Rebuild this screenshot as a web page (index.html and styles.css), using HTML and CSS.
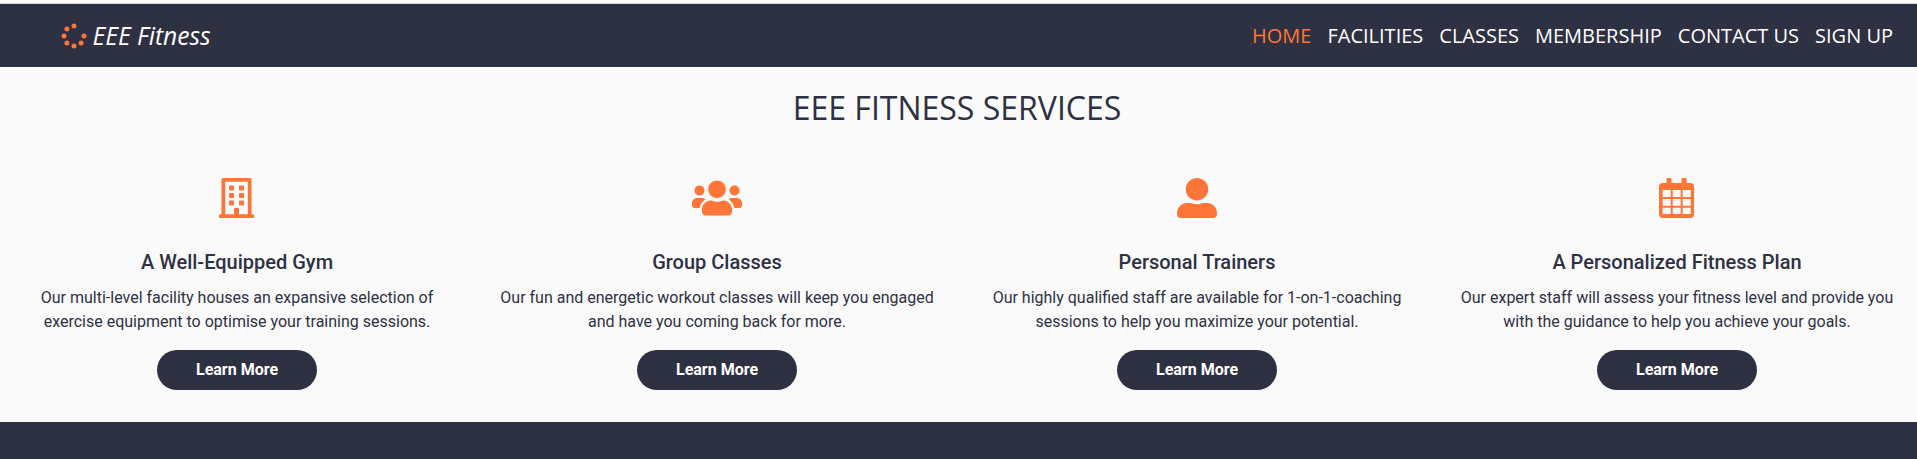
FILE: index.html
```html
<!DOCTYPE html>
<html lang="en">
<head>
<meta charset="utf-8">
<title>EEE Fitness</title>
<link rel="stylesheet" href="styles.css">
</head>
<body>
<header class="header">
  <a class="logo">
    <svg class="logo-mark" viewBox="0 0 26 26"><circle cx="13" cy="3" r="2.5"/><circle cx="5.9" cy="5.900" r="2.5"/><circle cx="3" cy="13" r="2.5"/><circle cx="5.9" cy="20.1" r="2.5"/><circle cx="13" cy="23" r="2.5"/><circle cx="20.1" cy="20.1" r="2.5"/><circle cx="23" cy="13" r="2.5"/></svg>
    <span>EEE Fitness</span>
  </a>
  <nav class="nav">
    <a class="active">Home</a><a>Facilities</a><a>Classes</a><a>Membership</a><a>Contact Us</a><a>Sign Up</a>
  </nav>
</header>
<main class="services">
  <h1 class="title">EEE Fitness Services</h1>
  <div class="grid">
    <section class="card">
      <svg class="icon icon-narrow" width="35" height="40" viewBox="0 0 448 512"><path d="M128 148v-40c0-6.600 5.400-12 12-12h40c6.600 0 12 5.400 12 12v40c0 6.600-5.400 12-12 12h-40c-6.600 0-12-5.400-12-12zm140 12h40c6.600 0 12-5.400 12-12v-40c0-6.600-5.400-12-12-12h-40c-6.600 0-12 5.400-12 12v40c0 6.600 5.400 12 12 12zm-128 96h40c6.600 0 12-5.400 12-12v-40c0-6.600-5.400-12-12-12h-40c-6.600 0-12 5.400-12 12v40c0 6.600 5.400 12 12 12zm128 0h40c6.600 0 12-5.400 12-12v-40c0-6.600-5.400-12-12-12h-40c-6.600 0-12 5.400-12 12v40c0 6.600 5.400 12 12 12zm-76 84v-40c0-6.600-5.400-12-12-12h-40c-6.600 0-12 5.400-12 12v40c0 6.600 5.400 12 12 12h40c6.600 0 12-5.400 12-12zm76 12h40c6.600 0 12-5.400 12-12v-40c0-6.600-5.400-12-12-12h-40c-6.600 0-12 5.400-12 12v40c0 6.600 5.400 12 12 12zm180 124v36H0v-36c0-6.600 5.400-12 12-12h19.500V24c0-13.300 10.700-24 24-24h337c13.300 0 24 10.700 24 24v440H436c6.600 0 12 5.400 12 12zM79.500 463H192v-67c0-6.600 5.400-12 12-12h40c6.600 0 12 5.400 12 12v67h112.500V49L80 48l-.5 415z"/></svg>
      <h2>A Well-Equipped Gym</h2>
      <p>Our multi-level facility houses an expansive selection of<br>exercise equipment to optimise your training sessions.</p>
      <a class="button">Learn More</a>
    </section>
    <section class="card">
      <svg class="icon" width="50" height="40" viewBox="0 0 640 512"><path d="M96 224c35.300 0 64-28.700 64-64s-28.700-64-64-64-64 28.700-64 64 28.700 64 64 64zm448 0c35.300 0 64-28.700 64-64s-28.700-64-64-64-64 28.700-64 64 28.700 64 64 64zm32 32h-64c-17.600 0-33.500 7.100-45.100 18.600 40.300 22.100 68.900 62 75.100 109.400h66c17.700 0 32-14.300 32-32v-32c0-35.300-28.700-64-64-64zm-256 0c61.900 0 112-50.100 112-112S381.900 32 320 32 208 82.100 208 144s50.100 112 112 112zm76.800 32h-8.300c-20.800 10-43.900 16-68.500 16s-47.600-6-68.500-16h-8.300C179.600 288 128 339.600 128 403.200V432c0 26.500 21.500 48 48 48h288c26.500 0 48-21.500 48-48v-28.800c0-63.600-51.600-115.200-115.200-115.200zm-223.700-13.400C161.500 263.100 145.600 256 128 256H64c-35.300 0-64 28.700-64 64v32c0 17.700 14.300 32 32 32h65.900c6.300-47.400 34.900-87.300 75.200-109.400z"/></svg>
      <h2>Group Classes</h2>
      <p>Our fun and energetic workout classes will keep you engaged<br>and have you coming back for more.</p>
      <a class="button">Learn More</a>
    </section>
    <section class="card">
      <svg class="icon" width="40" height="40" viewBox="0 0 512 512"><path d="M256 288c79.500 0 144-64.500 144-144S335.500 0 256 0 112 64.500 112 144s64.500 144 144 144zm128 32h-55.100c-22.200 10.200-46.900 16-72.900 16s-50.600-5.800-72.900-16H128C57.300 320 0 377.300 0 448v16c0 26.500 21.500 48 48 48h416c26.500 0 48-21.500 48-48v-16c0-70.700-57.300-128-128-128z"/></svg>
      <h2>Personal Trainers</h2>
      <p>Our highly qualified staff are available for 1-on-1-coaching<br>sessions to help you maximize your potential.</p>
      <a class="button">Learn More</a>
    </section>
    <section class="card">
      <svg class="icon icon-narrow" width="35" height="40" viewBox="0 0 35 40"><path fill-rule="evenodd" d="M8.300 0h3.400q.8 0 .8.800V5h10V.8q0-.8.800-.8h3.400q.8 0 .8.800V5h3.800q3.700 0 3.700 3.700v27.600q0 3.700-3.700 3.700H3.700Q0 40 0 36.300V8.700Q0 5 3.700 5h3.800V.8q0-.8.800-.8zM3.700 12v7h8v-7zm10 0v7h8v-7zm10 0v7h8v-7zm-20 9v6.700h8V21zm10 0v6.700h8V21zm10 0v6.700h8V21zm-20 8.800V36h8v-6.200zm10 0V36h8v-6.200zm10 0V36h8v-6.200z"/></svg>
      <h2>A Personalized Fitness Plan</h2>
      <p>Our expert staff will assess your fitness level and provide you<br>with the guidance to help you achieve your goals.</p>
      <a class="button">Learn More</a>
    </section>
  </div>
</main>
<footer class="footer"></footer>
</body>
</html>
```
FILE: styles.css
```css
* { box-sizing: border-box; }
body {
  margin: 0;
  height: 459px;
  overflow: hidden;
  display: flex;
  flex-direction: column;
  padding-top: 3px;
  background: #fff;
  color: #2e3142;
  font-family: Roboto, sans-serif;
}
.header {
  height: 64px;
  flex: none;
  display: flex;
  align-items: center;
  justify-content: space-between;
  padding: 0 24px 0 60.500px;
  border-top: 1px solid #d5d6da;
  background: #2e3142;
  color: #fff;
  font-family: "Open Sans", sans-serif;
}
.logo {
  display: flex;
  align-items: center;
  gap: 6px;
  font-size: 24.600px;
  font-style: italic;
}
.logo-mark { width: 26px; height: 26px; fill: #ff7537; }
.nav {
  display: flex;
  gap: 16px;
  font-size: 20px;
  text-transform: uppercase;
}
.nav .active { color: #ff7537; }
.services {
  height: 355px;
  flex: none;
  background: #fafafa;
}
.title {
  margin: 0 0 0 -3px;
  padding-top: 19px;
  font: 400 32px/44px "Open Sans", sans-serif;
  text-align: center;
  text-transform: uppercase;
}
.grid {
  display: grid;
  grid-template-columns: repeat(4, 480px);
  margin-left: -3px;
  padding-top: 48px;
}
.card {
  display: flex;
  flex-direction: column;
  align-items: center;
  text-align: center;
}
.icon { fill: #ff7537; }
.icon-narrow { margin-right: 1px; }
.card h2 {
  margin: 32px 0 0;
  font-size: 20px;
  font-weight: 500;
  line-height: 24px;
}
.card p {
  margin: 12px 0 0;
  font-size: 16px;
  line-height: 24px;
  white-space: nowrap;
}
.button {
  width: 160px;
  margin-top: 16px;
  border-radius: 20px;
  background: #2e3142;
  color: #fff;
  font-size: 16px;
  font-weight: 700;
  line-height: 40px;
}
.footer { flex: 1; background: #2e3142; }
```
